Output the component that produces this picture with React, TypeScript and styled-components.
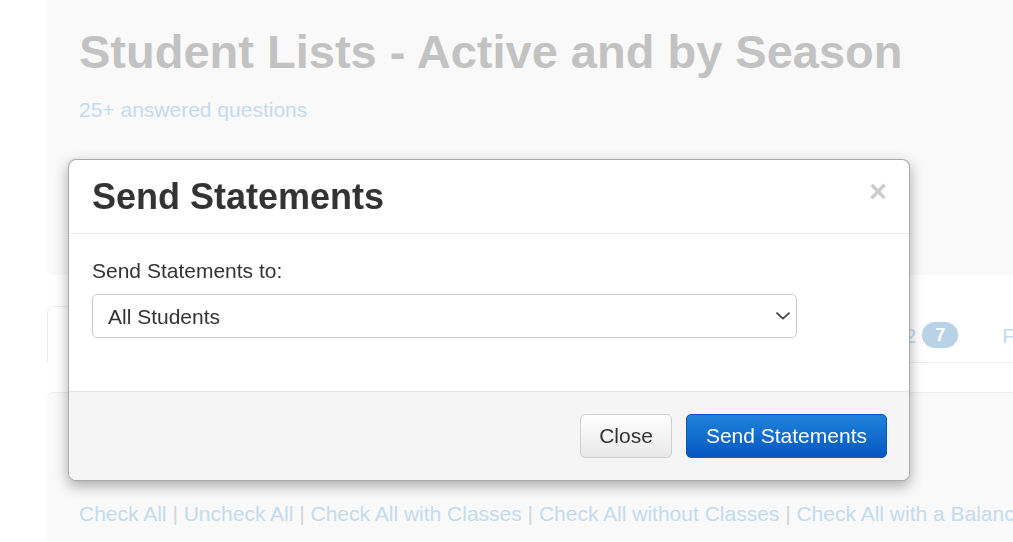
import React from "react";
import styled, { createGlobalStyle } from "styled-components";

const GlobalStyle = createGlobalStyle`
  html, body {
    margin: 0;
    padding: 0;
    background: #ffffff;
    overflow: hidden;
  }
  body {
    font-family: "Liberation Sans", Arial, Helvetica, sans-serif;
    width: 1013px;
    height: 542px;
  }
  * { box-sizing: border-box; }
`;

const Page = styled.div`
  width: 1400px;
  padding-left: 47px;
  display: flex;
  flex-direction: column;
`;

const HeaderPanel = styled.section`
  height: 275px;
  background: #f9f9f9;
  border-bottom-left-radius: 6px;
  padding: 26px 32px 0;
`;

const PageTitle = styled.h1`
  margin: 0;
  font-size: 47px;
  line-height: 52px;
  font-weight: 700;
  color: #c2c2c2;
`;

const SubLink = styled.a`
  display: block;
  margin-top: 17px;
  font-size: 21px;
  line-height: 30px;
  color: #c4dbee;
  text-decoration: none;
`;

const TabNav = styled.ul`
  list-style: none;
  margin: 31px 0 0;
  padding: 0;
  display: flex;
  border-bottom: 1px solid #eeeeee;
`;

const Tab = styled.li<{ $active?: boolean }>`
  margin: 0 2px -1px 0;
  height: 57px;
  padding: 14px 20px 0;
  border: 1px solid ${(p) => (p.$active ? "#eeeeee" : "transparent")};
  border-bottom-color: ${(p) => (p.$active ? "#ffffff" : "transparent")};
  border-radius: 6px 6px 0 0;
  background: ${(p) => (p.$active ? "#ffffff" : "transparent")};
  font-size: 21px;
  line-height: 30px;
  color: ${(p) => (p.$active ? "#cfcfcf" : "#c4dbee")};
  white-space: nowrap;
`;

const Badge = styled.span`
  display: inline-block;
  margin-left: 6px;
  padding: 4px 13px;
  border-radius: 13px;
  background: #b8d2e7;
  color: #ffffff;
  font-size: 18px;
  line-height: 18px;
  font-weight: 700;
  vertical-align: 2px;
`;

const ListPanel = styled.section`
  margin-top: 29px;
  height: 200px;
  background: #f9f9f9;
  border-top: 1px solid #efefef;
  border-top-left-radius: 6px;
  padding: 106px 32px 0;
`;

const LinkRow = styled.div`
  font-size: 21px;
  line-height: 30px;
  color: #cfd7de;
  white-space: nowrap;
`;

const RowLink = styled.a`
  color: #c4dbee;
  text-decoration: none;
`;

/* ---------- modal ---------- */

const Dialog = styled.div`
  position: fixed;
  left: 68px;
  top: 159px;
  width: 842px;
  background: #ffffff;
  border: 1px solid rgba(0, 0, 0, 0.33);
  border-radius: 8px;
  box-shadow: 0 5px 14px rgba(0, 0, 0, 0.32);
  overflow: hidden;
  color: #333333;
`;

const DialogHeader = styled.div`
  display: flex;
  justify-content: space-between;
  align-items: flex-start;
  padding: 17px 23px 16px;
  border-bottom: 1px solid #e8e8e8;
`;

const DialogTitle = styled.h4`
  margin: 0;
  font-size: 36px;
  line-height: 40px;
  font-weight: 700;
  color: #333333;
`;

const CloseX = styled.button`
  margin: 2px -1px 0 0;
  padding: 0;
  border: 0;
  background: transparent;
  font-family: "Liberation Sans", Arial, sans-serif;
  font-size: 31px;
  line-height: 26px;
  font-weight: 700;
  color: #000000;
  opacity: 0.2;
  cursor: pointer;
`;

const DialogBody = styled.div`
  padding: 22px 23px 53px;
`;

const FieldLabel = styled.label`
  display: block;
  margin-bottom: 8px;
  font-size: 21px;
  line-height: 30px;
  color: #333333;
`;

const SelectWrap = styled.div`
  position: relative;
  width: 705px;
`;

const Select = styled.select`
  appearance: none;
  -webkit-appearance: none;
  display: block;
  width: 100%;
  height: 44px;
  padding: 0 40px 0 15px;
  border: 1px solid #cccccc;
  border-radius: 5px;
  background: #ffffff;
  font-family: "Liberation Sans", Arial, sans-serif;
  font-size: 21px;
  color: #333333;
`;

const Chevron = styled.svg`
  position: absolute;
  right: 7px;
  top: 18px;
  pointer-events: none;
`;

const DialogFooter = styled.div`
  display: flex;
  justify-content: flex-end;
  gap: 14px;
  padding: 22px 22px 22px;
  border-top: 1px solid #e5e5e5;
  background: #f5f5f5;
`;

const Button = styled.button<{ $primary?: boolean }>`
  height: 44px;
  padding: 0 ${(p) => (p.$primary ? "19px" : "18px")};
  border-radius: 5px;
  font-family: "Liberation Sans", Arial, sans-serif;
  font-size: 21px;
  line-height: 30px;
  cursor: pointer;
  color: ${(p) => (p.$primary ? "#ffffff" : "#333333")};
  border: 1px solid ${(p) => (p.$primary ? "#0a58b4" : "#cfcfcf")};
  background: ${(p) =>
    p.$primary
      ? "linear-gradient(to bottom, #1e82dc 0%, #0558c0 100%)"
      : "linear-gradient(to bottom, #ffffff 0%, #e8e8e8 100%)"};
`;

const tabs = [
  { label: "Active", count: 1052, active: true },
  { label: "Dropped" },
  { label: "Winter 2022", count: 31 },
  { label: "Spring 2022", count: 58 },
  { label: "Summer 2022", count: 7 },
  { label: "Fall 2022", count: 12 },
];

const links = [
  "Check All",
  "Uncheck All",
  "Check All with Classes",
  "Check All without Classes",
  "Check All with a Balance",
  "Check All with a Credit",
];

export default function App() {
  return (
    <>
      <GlobalStyle />
      <Page>
        <HeaderPanel>
          <PageTitle>Student Lists - Active and by Season</PageTitle>
          <SubLink href="#">25+ answered questions</SubLink>
        </HeaderPanel>

        <TabNav>
          {tabs.map((t) => (
            <Tab key={t.label} $active={t.active}>
              {t.label}
              {t.count !== undefined && <Badge>{t.count}</Badge>}
            </Tab>
          ))}
        </TabNav>

        <ListPanel>
          <LinkRow>
            {links.map((l, i) => (
              <React.Fragment key={l}>
                {i > 0 && " | "}
                <RowLink href="#">{l}</RowLink>
              </React.Fragment>
            ))}
          </LinkRow>
        </ListPanel>
      </Page>

      <Dialog role="dialog">
        <DialogHeader>
          <DialogTitle>Send Statements</DialogTitle>
          <CloseX aria-label="Close">×</CloseX>
        </DialogHeader>
        <DialogBody>
          <FieldLabel>Send Statements to:</FieldLabel>
          <SelectWrap>
            <Select defaultValue="all">
              <option value="all">All Students</option>
              <option value="balance">Students with a Balance</option>
            </Select>
            <Chevron width="14" height="8" viewBox="0 0 14 8" fill="none">
              <path d="M1 1.2 L7 6.6 L13 1.2" stroke="#444" strokeWidth="1.8" strokeLinecap="round" strokeLinejoin="round" />
            </Chevron>
          </SelectWrap>
        </DialogBody>
        <DialogFooter>
          <Button>Close</Button>
          <Button $primary>Send Statements</Button>
        </DialogFooter>
      </Dialog>
    </>
  );
}
